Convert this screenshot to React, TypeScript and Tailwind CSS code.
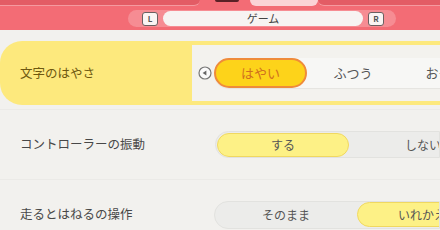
import React from 'react'

const font = { fontFamily: '"Noto Sans CJK JP", "Noto Sans", sans-serif' }

function KeyCap({ label }: { label: string }) {
  return (
    <div className="w-[16px] h-[14px] shrink-0 rounded-[3px] border border-[#6b5f60] bg-[#faf4f3] flex items-center justify-center text-[8px] font-bold leading-none text-[#555]">
      {label}
    </div>
  )
}

function TopBar() {
  return (
    <div className="relative h-[30px] bg-[#f36c75]">
      {/* tab strip */}
      <div className="flex h-[6px]">
        <div className="w-[200px] h-full bg-[#e35c65] rounded-br-[8px] border-b border-[#f59aa0]"></div>
        <div className="w-[50px] h-full flex">
          <div className="ml-[15px] w-[24px] h-[2px] bg-[#5a2126] rounded-b-[2px]"></div>
        </div>
        <div className="w-[68px] h-full bg-[#fbd3d6] rounded-b-[10px]"></div>
        <div className="flex-1 h-full bg-[#e35c65] rounded-bl-[8px] border-b border-[#f59aa0]"></div>
      </div>
      <div className="flex pt-[4px] pl-[128px]">
        <div className="w-[268px] h-[17px] rounded-full bg-[#f68c93] flex items-center pl-[14px] pr-[12px] gap-[5px]">
          <KeyCap label="L" />
          <div className="flex-1 h-[15px] rounded-full bg-[#f7f3f2] flex items-center justify-center text-[11px] text-[#444] leading-none">
            ゲーム
          </div>
          <KeyCap label="R" />
        </div>
      </div>
    </div>
  )
}

function ArrowLeft() {
  return (
    <svg width="14" height="14" viewBox="0 0 14 14" className="shrink-0">
      <circle cx="7" cy="7" r="6" fill="#fafafa" stroke="#777" strokeWidth="1.2" />
      <path d="M4.6 7 L8.4 4.6 L8.4 9.4 Z" fill="#666" />
    </svg>
  )
}

export default function App() {
  return (
    <div className="w-[440px] h-[230px] overflow-hidden bg-[#f2f1ee]" style={font}>
      <TopBar />

      <div className="pt-[9px]">
        {/* Row 1: focused */}
        <div className="h-[70px] py-[2px] flex">
          <div className="flex-1 min-w-0 flex items-center rounded-l-[22px] bg-[#fde97d] pl-[20px] mb-[2px]">
            <div className="w-[172px] shrink-0 text-[12.5px] text-[#6e5810]">文字のはやさ</div>
            <div className="flex-1 min-w-0 overflow-hidden self-stretch my-[4px] bg-[#f3f2ee] flex items-center pl-[6px]">
              <ArrowLeft />
              <div className="shrink-0 ml-[2px] flex items-center h-[30px] rounded-full bg-[#f7f7f5] shadow-[0_1px_1px_rgba(0,0,0,0.06)]">
                <div className="w-[93px] shrink-0 h-[30px] rounded-full bg-[#fdd31a] border-2 border-[#ef8b3a] flex items-center justify-center text-[13px] text-[#d0701e]">
                  はやい
                </div>
                <div className="w-[92px] shrink-0 text-center text-[13px] text-[#555]">ふつう</div>
                <div className="w-[92px] shrink-0 text-center text-[13px] text-[#555]">おそい</div>
              </div>
            </div>
          </div>
        </div>

        {/* Row 2 */}
        <div className="h-[70px] flex items-center pl-[20px] border-t border-[#ebeae7]">
          <div className="w-[195px] shrink-0 text-[12.5px] text-[#484848]">コントローラーの振動</div>
          <div className="flex-1 min-w-0 overflow-hidden flex items-center h-[27px] rounded-l-full bg-[#ececea] border border-[#e2e2df] pl-[1px]">
            <div className="w-[132px] shrink-0 h-[24px] rounded-full bg-[#fdf186] border border-[#f0d860] flex items-center justify-center text-[12px] text-[#555]">
              する
            </div>
            <div className="shrink-0 pl-[56px] text-[12px] text-[#555]">しない</div>
          </div>
        </div>

        {/* Row 3 */}
        <div className="h-[70px] flex items-center pl-[20px] border-t border-[#ebeae7]">
          <div className="w-[194px] shrink-0 text-[12.5px] text-[#484848]">走るとはねるの操作</div>
          <div className="flex-1 min-w-0 overflow-hidden flex items-center h-[28px] rounded-l-full bg-[#ececea] border border-[#e2e2df]">
            <div className="w-[142px] shrink-0 text-center text-[12px] text-[#555]">そのまま</div>
            <div className="w-[132px] shrink-0 h-[25px] rounded-full bg-[#fdf186] border border-[#f0d860] flex items-center pl-[40px] text-[12px] text-[#555]">
              いれかえ
            </div>
          </div>
        </div>
      </div>
    </div>
  )
}
